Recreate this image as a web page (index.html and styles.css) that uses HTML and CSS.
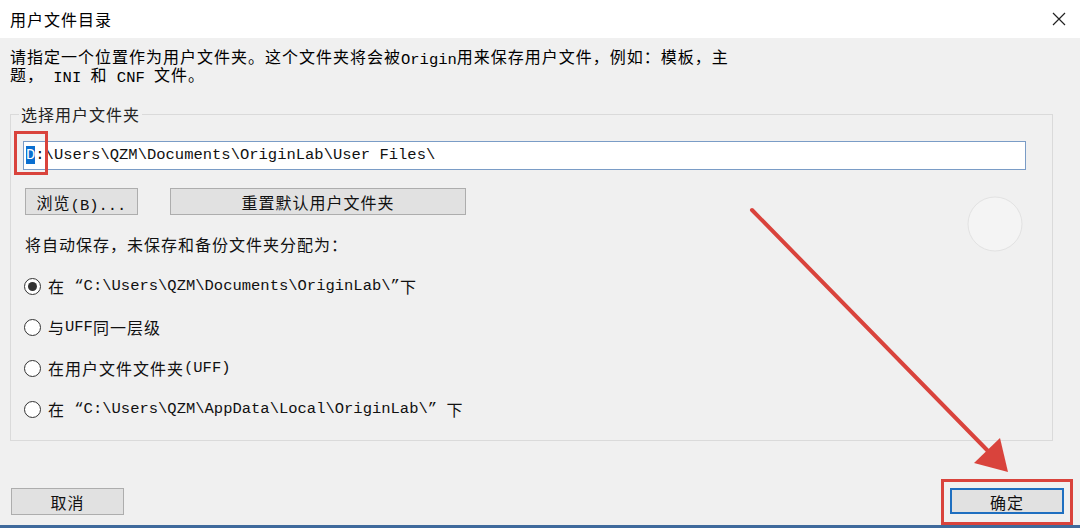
FILE: index.html
```html
<!DOCTYPE html>
<html lang="zh-CN">
<head>
    <meta charset="UTF-8">
    <title>用户文件目录</title>
    <link rel="stylesheet" href="styles.css">
</head>
<body>
    <div class="titlebar">
        <span class="title">用户文件目录</span>
        <svg class="close" width="14" height="14" viewBox="0 0 14 14">
            <path d="M1 1 L13 13 M13 1 L1 13" stroke="#222" stroke-width="1.2" fill="none"/>
        </svg>
    </div>

    <div class="content">
        <p class="desc">请指定一个位置作为用户文件夹。这个文件夹将会被<span class="en">Origin</span>用来保存用户文件，例如：模板，主<br>题，<span class="en"> INI </span>和<span class="en"> CNF </span>文件。</p>

        <fieldset class="group">
            <legend>选择用户文件夹</legend>
            <div class="path-field"><span class="sel">D</span>:\Users\QZM\Documents\OriginLab\User Files\</div>

            <div class="btn-row">
                <button class="btn btn-browse">浏览<span class="en">(B)...</span></button>
                <button class="btn btn-reset">重置默认用户文件夹</button>
            </div>

            <p class="hint">将自动保存，未保存和备份文件夹分配为：</p>

            <div class="radios">
                <div class="radio-row"><span class="radio checked"></span>在<span class="en">&nbsp;“C:\Users\QZM\Documents\OriginLab\”</span>下</div>
                <div class="radio-row"><span class="radio"></span>与<span class="en">UFF</span>同一层级</div>
                <div class="radio-row"><span class="radio"></span>在用户文件文件夹<span class="en">(UFF)</span></div>
                <div class="radio-row"><span class="radio"></span>在<span class="en">&nbsp;“C:\Users\QZM\AppData\Local\OriginLab\”&nbsp;</span>下</div>
            </div>
        </fieldset>
    </div>

    <div class="footer">
        <button class="btn btn-cancel">取消</button>
        <button class="btn btn-ok">确定</button>
    </div>
    <div class="frame-edge"></div>

    <!-- 标注：红框和箭头 -->
    <div class="mark mark-d"></div>
    <div class="mark mark-ok"></div>
    <svg class="annot" width="1080" height="528" viewBox="0 0 1080 528">
        <circle cx="995" cy="224" r="27" fill="#f4f4f4" stroke="#e2e2e2" stroke-width="1"/>
        <line x1="752" y1="210" x2="988" y2="451" stroke="#d9433c" stroke-width="4" stroke-linecap="round"/>
        <polygon points="1008,472 974,463 1000,438" fill="#d9433c"/>
    </svg>
</body>
</html>
```

FILE: styles.css
```css
body {
    margin: 0;
    width: 1080px;
    height: 528px;
    display: flex;
    flex-direction: column;
    position: relative;
    overflow: hidden;
    background-color: #f0f0f0;
    color: #111;
    font-family: "Noto Sans CJK SC", sans-serif;
    font-size: 16px;
    letter-spacing: 1px;
}
.en {
    font-family: "Liberation Mono", "Noto Sans CJK SC", monospace;
    font-size: 15.5px;
    line-height: 0;
    letter-spacing: 0;
    vertical-align: -1px;
}
.titlebar {
    height: 38px;
    background-color: #fff;
    display: flex;
    align-items: center;
    justify-content: space-between;
    padding: 0 14px 0 10px;
    flex-shrink: 0;
}
.title {
    font-size: 16px;
    color: #000;
}
.content {
    padding: 9px 27px 0 10px;
}
.desc {
    margin: 0;
    height: 36px;
    line-height: 18px;
    color: #000;
}
.group {
    margin: 22px 0 0 0;
    border: 1px solid #dadada;
    padding: 18px 26px 22px 12px;
}
.group legend {
    margin-left: -4px;
    padding: 0 2px;
    height: 18px;
    line-height: 18px;
    color: #222;
}
.path-field {
    height: 27px;
    line-height: 27px;
    border: 1px solid #7a9cc6;
    background-color: #fff;
    padding-left: 2px;
    font-family: "Liberation Mono", monospace;
    font-size: 15.5px;
    letter-spacing: 0;
    color: #111;
}
.sel {
    background-color: #0a6fd0;
    color: #fff;
}
.btn-row {
    display: flex;
    gap: 32px;
    margin: 18px 0 0 2px;
}
.btn {
    height: 27px;
    padding: 0;
    border: 1px solid #adadad;
    background-color: #e1e1e1;
    font-family: "Noto Sans CJK SC", sans-serif;
    font-size: 16px;
    letter-spacing: 1px;
    color: #111;
}
.btn-browse {
    width: 113px;
}
.btn-reset {
    width: 296px;
}
.hint {
    margin: 20px 0 0 2px;
    height: 18px;
    line-height: 18px;
}
.radios {
    margin-top: 24px;
}
.radio-row {
    display: flex;
    align-items: center;
    height: 18px;
    line-height: 18px;
    margin: 0 0 23px 1px;
}
.radio-row:last-child {
    margin-bottom: 0;
}
.radio {
    width: 15px;
    height: 15px;
    border: 1px solid #333;
    border-radius: 50%;
    background-color: #fff;
    margin-right: 7px;
    position: relative;
    flex-shrink: 0;
}
.radio.checked::after {
    content: "";
    position: absolute;
    left: 3px;
    top: 3px;
    width: 9px;
    height: 9px;
    border-radius: 50%;
    background-color: #333;
}
.footer {
    display: flex;
    justify-content: space-between;
    margin-top: 47px;
    padding: 0 16px 0 11px;
}
.btn-cancel {
    width: 113px;
}
.btn-ok {
    width: 114px;
    height: 26px;
    border: 2px solid #1f6fc0;
}
.frame-edge {
    margin-top: auto;
    height: 3px;
    background-color: #3f6a9c;
}
.mark {
    position: absolute;
    border: 3px solid #d9433c;
}
.mark-d {
    left: 14px;
    top: 131px;
    width: 28px;
    height: 38px;
}
.mark-ok {
    left: 941px;
    top: 479px;
    width: 126px;
    height: 40px;
}
.annot {
    position: absolute;
    left: 0;
    top: 0;
    pointer-events: none;
}
```
